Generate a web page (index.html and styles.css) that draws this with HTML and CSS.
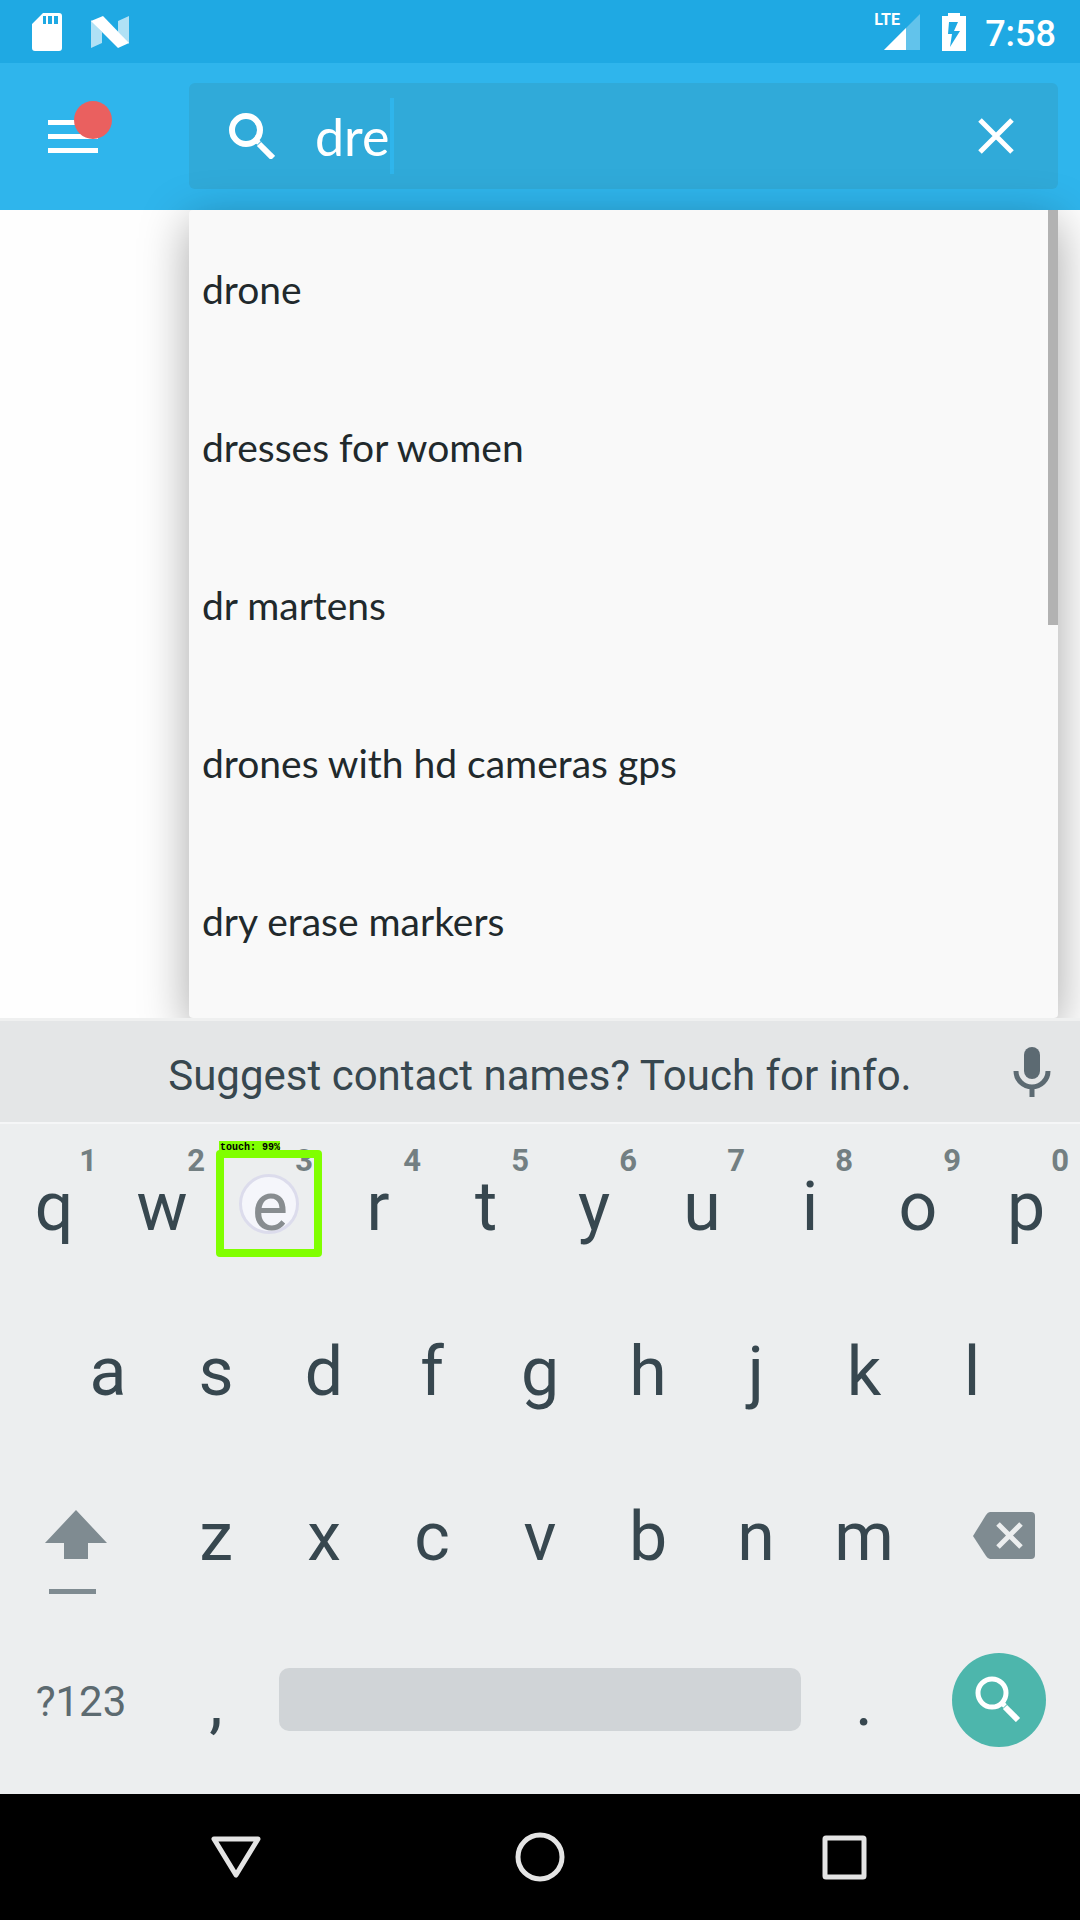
FILE: index.html
```html
<!DOCTYPE html>
<html lang="en">
<head>
<meta charset="utf-8">
<meta name="viewport" content="width=device-width, initial-scale=1">
<title>Search</title>
<link rel="stylesheet" href="styles.css">
</head>
<body>
<div class="screen">
  <div class="status-bar">
    <div class="status-group">
      <svg class="sd-icon" width="32" height="40" viewBox="0 0 32 40"><path fill="#fff" fill-rule="evenodd" d="M12 1H28Q31 1 31 4V36Q31 39 28 39H4Q1 39 1 36V12ZM12 4V12H15V4ZM17 4V12H21V4ZM23 4V12H27V4Z"/></svg>
      <svg class="n-icon" width="40" height="32" viewBox="0 0 40 32"><path fill="#fff" fill-opacity=".65" d="M1 4 12 16V27L1 32ZM28 5 39 0V28L28 16Z"/><path fill="#fff" d="M1 5 13 0 39 27 28 32Z"/></svg>
    </div>
    <div class="status-group">
      <div class="signal">
        <svg width="36" height="36" viewBox="0 0 36 36"><path fill="#fff" fill-opacity=".3" d="M36 0V36H0Z"/><path fill="#fff" d="M22 14V36H0Z"/></svg>
        <span class="network">LTE</span>
      </div>
      <svg class="battery" width="24" height="38" viewBox="0 0 24 38"><path fill="#fff" fill-rule="evenodd" d="M6 0H18V3H24V38H0V3H6ZM7 9 6 21H10L8 34 18 18H12L16 9Z"/></svg>
      <time class="clock">7:58</time>
    </div>
  </div>

  <header class="app-bar">
    <button class="menu-button" aria-label="Menu">
      <svg width="66" height="56" viewBox="0 0 66 56"><path fill="#fff" d="M0 19H50V24H0ZM0 33H50V38H0ZM0 47H50V52H0Z"/><circle cx="45" cy="19" r="19" fill="#ea605f"/></svg>
    </button>
    <form class="search-box">
      <svg class="search-icon" width="46" height="46" viewBox="0 0 46 46"><circle cx="17" cy="17" r="14" fill="none" stroke="#fff" stroke-width="6"/><path d="M27 27 30 30" stroke="#fff" stroke-width="5"/><path d="M30 31 44 45" stroke="#fff" stroke-width="6"/></svg>
      <div class="field">
        <input class="search-input" type="text" value="dre" aria-label="Search">
        <span class="caret"></span>
      </div>
      <button class="clear-button" type="button" aria-label="Clear">
        <svg width="36" height="36" viewBox="0 0 36 36"><path d="M2 2 34 34M34 2 2 34" stroke="#fff" stroke-width="5"/></svg>
      </button>
    </form>
  </header>

  <main class="content">
    <div class="dropdown">
      <ul class="suggestions">
        <li><button>drone</button></li>
        <li><button>dresses for women</button></li>
        <li><button>dr martens</button></li>
        <li><button>drones with hd cameras gps</button></li>
        <li><button>dry erase markers</button></li>
      </ul>
      <span class="scroll-thumb"></span>
    </div>
  </main>

  <section class="keyboard" aria-label="Keyboard">
    <div class="hint-strip">
      <button class="hint-text">Suggest contact names? Touch for info.</button>
      <button class="mic" aria-label="Voice input">
        <svg width="38" height="52" viewBox="0 0 38 52"><rect x="11" y="1" width="16" height="32" rx="8" fill="#5c6a72"/><path d="M3 25A16 16 0 0 0 35 25M19 41V51" fill="none" stroke="#5c6a72" stroke-width="5"/></svg>
      </button>
    </div>
    <div class="keys">
      <div class="row">
        <button class="key">q<span class="digit">1</span></button>
        <button class="key">w<span class="digit">2</span></button>
        <button class="key pressed"><span class="ripple"></span><span class="glyph">e</span><span class="digit">3</span><span class="mark"></span><span class="mark-label">touch: 99%</span></button>
        <button class="key">r<span class="digit">4</span></button>
        <button class="key">t<span class="digit">5</span></button>
        <button class="key">y<span class="digit">6</span></button>
        <button class="key">u<span class="digit">7</span></button>
        <button class="key">i<span class="digit">8</span></button>
        <button class="key">o<span class="digit">9</span></button>
        <button class="key">p<span class="digit">0</span></button>
      </div>
      <div class="row">
        <button class="key">a</button>
        <button class="key">s</button>
        <button class="key">d</button>
        <button class="key">f</button>
        <button class="key">g</button>
        <button class="key">h</button>
        <button class="key">j</button>
        <button class="key">k</button>
        <button class="key">l</button>
      </div>
      <div class="row">
        <button class="key wide shift" aria-label="Shift">
          <svg width="64" height="120" viewBox="0 0 64 120"><path fill="#7f8b91" d="M32 34 63 67H44V83H20V67H1ZM5 113H52V118H5Z"/></svg>
        </button>
        <button class="key">z</button>
        <button class="key">x</button>
        <button class="key">c</button>
        <button class="key">v</button>
        <button class="key">b</button>
        <button class="key">n</button>
        <button class="key">m</button>
        <button class="key wide backspace" aria-label="Backspace">
          <svg width="64" height="50" viewBox="0 0 64 50"><path fill="#7f8b91" d="M18 1H59Q63 1 63 5V44Q63 48 59 48H18Q16 48 14 45L1 25 14 4Q16 1 18 1Z"/><path d="M26 13 49 36M49 13 26 36" stroke="#eceeef" stroke-width="5"/></svg>
        </button>
      </div>
      <div class="row">
        <button class="key wide symbols">?123</button>
        <button class="key">,</button>
        <button class="key space" aria-label="Space"><span class="space-bar"></span></button>
        <button class="key">.</button>
        <button class="key wide search-key" aria-label="Search">
          <span class="go"><svg width="46" height="46" viewBox="0 0 46 46"><circle cx="17" cy="17" r="14" fill="none" stroke="#fff" stroke-width="5"/><path d="M27 27 30 30" stroke="#fff" stroke-width="5"/><path d="M30 31 43 44" stroke="#fff" stroke-width="6"/></svg></span>
        </button>
      </div>
    </div>
  </section>

  <nav class="nav-bar">
    <button aria-label="Back"><svg width="52" height="52" viewBox="0 0 52 52"><path d="M4 8H48L26 44Z" fill="none" stroke="#e4e4e4" stroke-width="5" stroke-linejoin="round"/></svg></button>
    <button aria-label="Home"><svg width="52" height="52" viewBox="0 0 52 52"><circle cx="26" cy="26" r="22" fill="none" stroke="#e4e4e4" stroke-width="5"/></svg></button>
    <button aria-label="Recent apps"><svg width="52" height="52" viewBox="0 0 52 52"><rect x="7" y="7" width="39" height="39" rx="1" fill="none" stroke="#e4e4e4" stroke-width="5"/></svg></button>
  </nav>
</div>
</body>
</html>
```

FILE: styles.css
```css
* {
  box-sizing: border-box;
}

body {
  margin: 0;
  font-family: Roboto, sans-serif;
}

button {
  border: 0;
  padding: 0;
  background: none;
  color: inherit;
  font: inherit;
}

svg {
  display: block;
  flex: none;
}

.screen {
  display: flex;
  flex-direction: column;
  min-height: 100vh;
  background: #fefefe;
}

/* System status bar */
.status-bar {
  display: flex;
  justify-content: space-between;
  height: 63px;
  padding: 0 24px 0 31px;
  background: #1fa9e3;
  color: #fff;
}

.status-group {
  display: flex;
  align-items: center;
}

.n-icon {
  margin-left: 27px;
}

.signal {
  position: relative;
  margin-right: 22px;
}

.network {
  position: absolute;
  left: -10px;
  top: -4px;
  font-size: 16px;
  line-height: 20px;
  font-weight: 700;
}

.battery {
  margin-right: 19px;
}

.clock {
  font-size: 36px;
  font-weight: 500;
  line-height: 42px;
  padding-top: 4px;
}

/* App bar with search */
.app-bar {
  display: flex;
  align-items: center;
  height: 147px;
  padding: 0 22px 2px 0;
  background: #2fb5ec;
}

.menu-button {
  width: 189px;
  padding: 0 0 14px 48px;
}

.search-box {
  display: flex;
  flex: 1;
  align-items: center;
  height: 106px;
  padding: 0 44px 0 40px;
  border-radius: 6px;
  background: #30aad9;
}

.field {
  position: relative;
  flex: 1;
  margin-left: 40px;
}

.search-input {
  display: block;
  width: 100%;
  height: 76px;
  border: 0;
  padding: 0;
  background: none;
  color: #fff;
  font-family: Lato, sans-serif;
  font-size: 52px;
  outline: 0;
}

.caret {
  position: absolute;
  left: 75px;
  top: 0;
  width: 4px;
  height: 76px;
  background: #2fb5ec;
}

/* Suggestions */
.content {
  display: flex;
  flex: 1;
  padding: 0 22px 0 189px;
}

.dropdown {
  position: relative;
  flex: 1;
  border-radius: 4px;
  background: #f9f9f9;
  box-shadow: 0 12px 48px rgba(0, 0, 0, .35);
}

.suggestions {
  margin: 0;
  padding: 0;
  list-style: none;
}

.suggestions button {
  display: block;
  width: 100%;
  height: 158px;
  padding-left: 13px;
  color: #21292c;
  font-family: Lato, sans-serif;
  font-size: 39px;
  text-align: left;
}

.scroll-thumb {
  position: absolute;
  top: 0;
  right: 0;
  width: 10px;
  height: 415px;
  background: #b2b2b2;
}

/* On-screen keyboard */
.keyboard {
  position: relative;
  background: #eceeef;
  color: #37474f;
}

.hint-strip {
  display: flex;
  align-items: center;
  height: 106px;
  border-top: 3px solid #eff0f0;
  border-bottom: 2px solid #f5f6f7;
  padding-right: 29px;
  background: #e4e6e7;
}

.hint-text {
  flex: 1;
  padding: 8px 0 0 67px;
  font-size: 42px;
}

.keys {
  padding-bottom: 10px;
}

.row {
  display: flex;
  justify-content: center;
}

.key {
  position: relative;
  display: flex;
  width: 10%;
  align-items: center;
  justify-content: center;
  height: 165px;
  font-size: 68px;
}

.wide {
  width: 15%;
}

.symbols {
  font-size: 42px;
  color: #5c6a70;
}

.shift {
  padding: 0 10px 2px 0;
}

.backspace {
  padding: 0 0 2px 10px;
}

.space {
  width: 50%;
  padding: 0 9px 4px;
}

.search-key {
  padding-bottom: 4px;
}

.space-bar {
  flex: 1;
  height: 63px;
  border-radius: 10px;
  background: #d0d4d7;
}

.go {
  display: flex;
  align-items: center;
  justify-content: center;
  width: 94px;
  height: 94px;
  padding: 0 2px 2px 0;
  border-radius: 50%;
  background: #4db6ac;
}

.digit {
  position: absolute;
  top: 18px;
  right: 11px;
  font-size: 31px;
  line-height: 38px;
  font-weight: 700;
  color: #737f82;
}

/* Touch indicator over the pressed key */
.glyph {
  position: relative;
  color: #888d90;
}

.ripple {
  position: absolute;
  left: 23px;
  top: 50px;
  width: 60px;
  height: 60px;
  border: 3px solid #dcdcec;
  border-radius: 50%;
  background: #f5f6fb;
}

.mark {
  position: absolute;
  left: 0;
  top: 26px;
  width: 106px;
  height: 107px;
  border: 8px solid #80ff00;
  border-radius: 4px;
}

.mark-label {
  position: absolute;
  left: 3px;
  top: 17px;
  padding: 1px 0 0 1px;
  background: #80ff00;
  color: #000;
  font-family: "Liberation Mono", monospace;
  font-size: 10px;
  font-weight: 700;
  line-height: 12px;
}

/* System navigation */
.nav-bar {
  display: flex;
  justify-content: center;
  height: 126px;
  padding: 0 84px;
  background: #000;
}

.nav-bar button {
  display: flex;
  flex: 1;
  align-items: center;
  justify-content: center;
}
```
